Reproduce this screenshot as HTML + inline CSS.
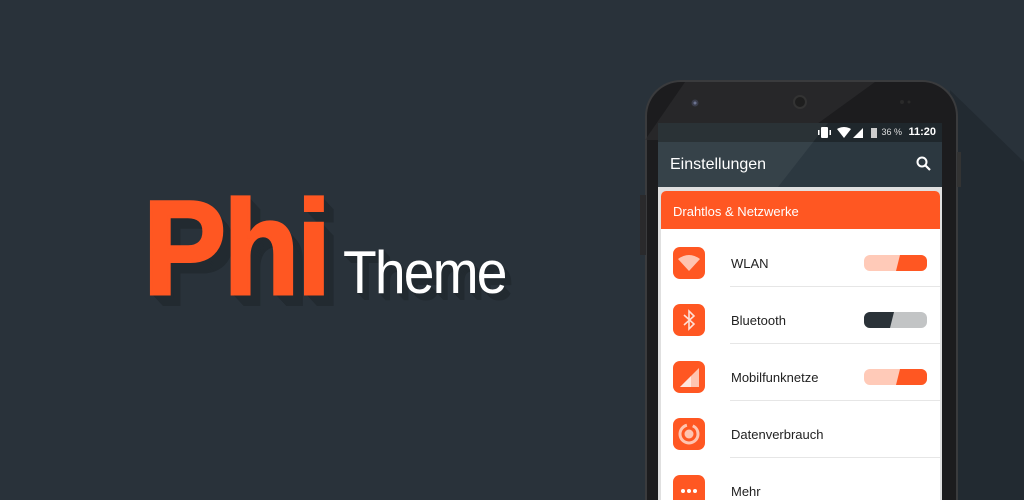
<!DOCTYPE html>
<html><head><style>
*{margin:0;padding:0;box-sizing:border-box}
html,body{width:1024px;height:500px;overflow:hidden}
body{background:#29323a;position:relative;font-family:"Liberation Sans",sans-serif}
#w{position:absolute;left:0;top:0;width:1024px;height:500px;overflow:hidden}
.abs{position:absolute}
.phi{left:143px;top:172px;font-size:134px;font-weight:bold;color:#ff5722;letter-spacing:-3px;transform:scaleX(0.93);transform-origin:left top;-webkit-text-stroke:3px #ff5722;
text-shadow:1px 1px #222a30,2px 2px #222a30,3px 3px #222a30,4px 4px #222a30,5px 5px #222a30,6px 6px #222a30,7px 7px #222a30,8px 8px #222a30,9px 9px #222a30,10px 10px #222a30,11px 11px #222a30,12px 12px #222a30}
.theme{left:343px;top:238px;font-size:60px;color:#fff;letter-spacing:-2px;transform:scaleX(0.92);transform-origin:left top;
text-shadow:1px 1px #222a30,2px 2px #222a30,3px 3px #222a30,4px 4px #222a30,5px 5px #222a30,6px 6px #222a30,7px 7px #222a30}
.row{position:absolute;left:661px;width:279px;height:57px}
.ic{position:absolute;left:12px;top:17px;width:32px;height:32px;border-radius:7px;background:#ff5722}
.lbl{position:absolute;left:70px;top:26px;font-size:13px;color:#222}
.div{position:absolute;left:69px;right:0;bottom:0;height:1px;background:#e6e6e6}
.tg{position:absolute;left:203px;top:25px;width:63px;height:16px;border-radius:6px;overflow:hidden}
</style></head><body><div id="w">
<svg class="abs" style="left:0;top:0" width="1024" height="500">
<polygon points="950,90 1024,162 1024,500 950,500" fill="#222a31"/>
</svg>
<div class="abs phi">Phi</div>
<div class="abs theme">Theme</div>
<div class="abs" style="left:645px;top:80px;width:313px;height:420px;border-radius:36px 36px 0 0;background:#1c1c1e;border:2px solid #3a3b3d;border-bottom:none"></div>
<div class="abs" style="left:640px;top:195px;width:6px;height:60px;background:#2a2a2c"></div>
<div class="abs" style="left:957px;top:152px;width:4px;height:35px;background:#333"></div>
<svg class="abs" style="left:645px;top:80px" width="313" height="60">
<polygon points="40,2 230,2 150,60 0,60" fill="#2e2f31" opacity="0.6"/>
<circle cx="50" cy="23" r="3.5" fill="#3a3d4a"/><circle cx="50" cy="23" r="1.5" fill="#6c7390"/>
<circle cx="155" cy="22" r="7" fill="#333"/><circle cx="155" cy="22" r="5" fill="#1e1e1e"/>
<circle cx="257" cy="22" r="2" fill="#2a2a2a"/><circle cx="264" cy="22" r="1.5" fill="#2a2a2a"/>
</svg>
<div class="abs" style="left:658px;top:123px;width:284px;height:377px;background:#e0e0e0;overflow:hidden">
 <div class="abs" style="left:0;top:0;width:284px;height:19px;background:#1f272c"></div>
 <div class="abs" style="left:0;top:19px;width:284px;height:45px;background:#2c3840"></div>
 <svg class="abs" style="left:0;top:0" width="284" height="64"><polygon points="0,0 170,0 120,64 0,64" fill="#fff" opacity="0.05"/></svg>
 <div class="abs" style="right:6px;top:3px;font-size:11px;color:#fff;font-weight:bold">11:20</div>
 <div class="abs" style="right:40px;top:4px;font-size:9px;color:#ddd">36 %</div>
 <svg class="abs" style="left:160px;top:3px" width="70" height="13">
  <rect x="3" y="1" width="7" height="11" rx="1" fill="#fff"/><rect x="0" y="4" width="1.5" height="5" fill="#fff"/><rect x="11.5" y="4" width="1.5" height="5" fill="#fff"/>
  <path d="M19 3 Q26 -1 33 3 L26 12Z" fill="#fff"/>
  <polygon points="35,12 45,2 45,12" fill="#fff"/>
  <rect x="53" y="2" width="6" height="10" fill="#ccc"/>
 </svg>
 <div class="abs" style="left:12px;top:33px;font-size:16px;color:#fff">Einstellungen</div>
 <svg class="abs" style="left:258px;top:33px" width="16" height="16"><circle cx="6" cy="6" r="4.5" stroke="#fff" stroke-width="2" fill="none"/><line x1="9.5" y1="9.5" x2="14" y2="14" stroke="#fff" stroke-width="2.2"/></svg>
</div>
<div class="abs" style="left:661px;top:191px;width:279px;height:309px;background:#fff;border-radius:5px 5px 0 0;overflow:hidden">
 <div style="height:38px;background:#ff5722;color:#fff;font-size:13px;padding:13px 0 0 12px">Drahtlos &amp; Netzwerke</div>
</div>
<div class="row" style="top:230px"><div class="ic"><svg width="32" height="32"><path d="M5 12 Q16 4 27 12 L16 24Z" fill="#ffc4b0"/></svg></div><div class="lbl">WLAN</div>
 <div class="tg" style="background:#ffcab8"><svg width="63" height="16"><polygon points="36,0 63,0 63,16 32,16" fill="#ff5722"/></svg></div><div class="div"></div></div>
<div class="row" style="top:287px"><div class="ic"><svg width="32" height="32"><path d="M11 11 L21 20 L16 25 L16 7 L21 12 L11 21" stroke="#ffe0d6" stroke-width="1.6" fill="none"/></svg></div><div class="lbl">Bluetooth</div>
 <div class="tg" style="background:#c2c4c5"><svg width="63" height="16"><polygon points="0,0 30,0 26,16 0,16" fill="#2a3238"/></svg></div><div class="div"></div></div>
<div class="row" style="top:344px"><div class="ic"><svg width="32" height="32"><polygon points="7,26 26,7 26,26" fill="#ffc4b0"/><polygon points="7,26 18,15 18,26" fill="#fff" opacity=".6"/></svg></div><div class="lbl">Mobilfunknetze</div>
 <div class="tg" style="background:#ffcab8"><svg width="63" height="16"><polygon points="36,0 63,0 63,16 32,16" fill="#ff5722"/></svg></div><div class="div"></div></div>
<div class="row" style="top:401px"><div class="ic"><svg width="32" height="32"><circle cx="16" cy="16" r="9" stroke="#ffc4b0" stroke-width="3" fill="none" stroke-dasharray="40 6"/><circle cx="16" cy="16" r="4.5" fill="#ffc4b0"/></svg></div><div class="lbl">Datenverbrauch</div><div class="div"></div></div>
<div class="row" style="top:458px;height:42px;overflow:hidden"><div class="ic"><svg width="32" height="32"><circle cx="10" cy="16" r="2" fill="#fff"/><circle cx="16" cy="16" r="2" fill="#fff"/><circle cx="22" cy="16" r="2" fill="#fff"/></svg></div><div class="lbl">Mehr</div></div>
</div></body></html>
